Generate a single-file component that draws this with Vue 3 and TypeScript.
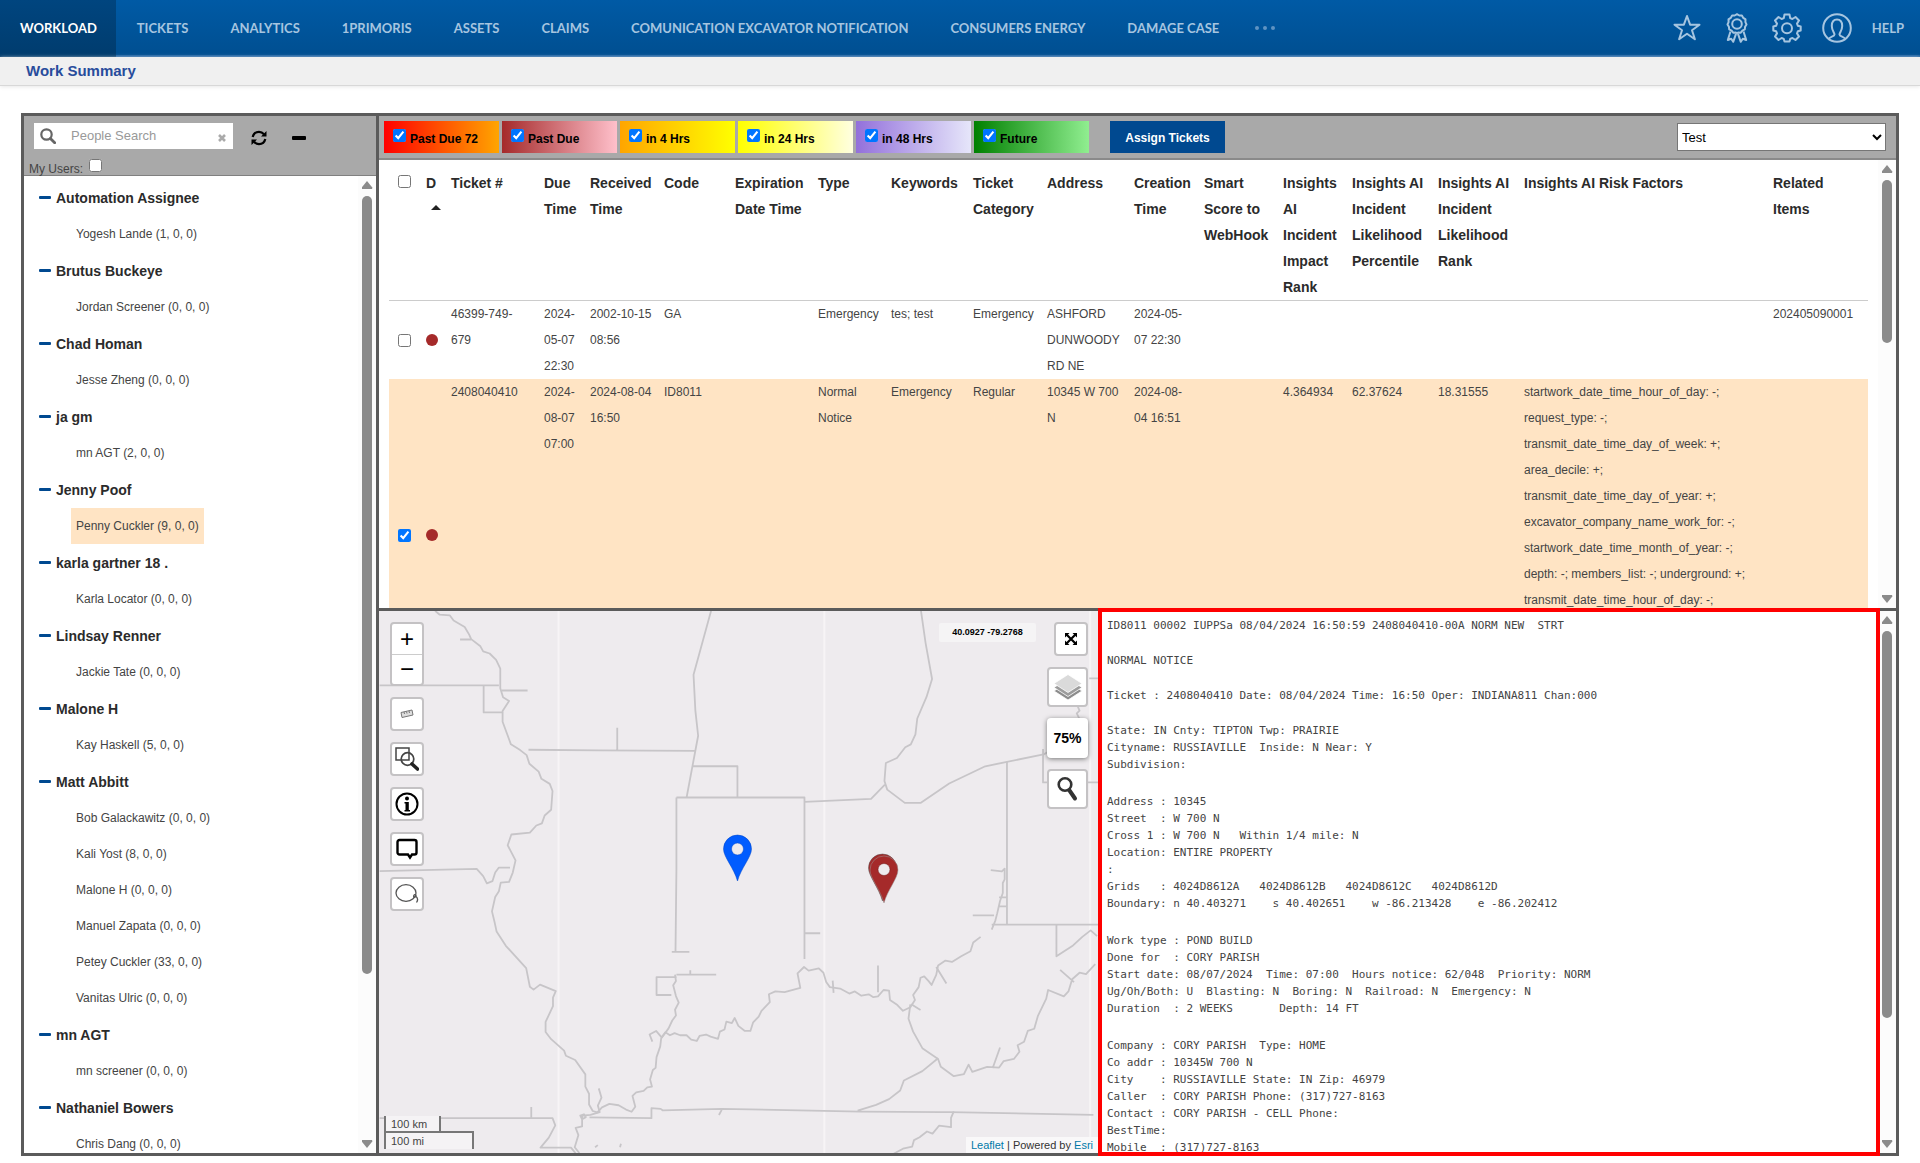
<script setup lang="ts">
import { ref } from 'vue'

interface Person { name: string; counts: string; selected?: boolean }
interface Group { name: string; people: Person[] }
interface Column { key: string; label: string; width: number | null }
interface Ticket { id: string; checked: boolean; tall?: boolean; cells: Record<string, string> }

const navItems = [
  'Workload', 'Tickets', 'Analytics', '1Primoris', 'Assets', 'Claims',
  'Comunication Excavator Notification', 'Consumers Energy', 'Damage Case',
]

const p = (name: string, first = 0, selected = false): Person => ({ name, counts: `(${first}, 0, 0)`, selected })

const groups: Group[] = [
  { name: 'Automation Assignee', people: [p('Yogesh Lande', 1)] },
  { name: 'Brutus Buckeye', people: [p('Jordan Screener')] },
  { name: 'Chad Homan', people: [p('Jesse Zheng')] },
  { name: 'ja gm', people: [p('mn AGT', 2)] },
  { name: 'Jenny Poof', people: [p('Penny Cuckler', 9, true)] },
  { name: 'karla gartner 18 .', people: [p('Karla Locator')] },
  { name: 'Lindsay Renner', people: [p('Jackie Tate')] },
  { name: 'Malone H', people: [p('Kay Haskell', 5)] },
  {
    name: 'Matt Abbitt',
    people: [p('Bob Galackawitz'), p('Kali Yost', 8), p('Malone H'), p('Manuel Zapata'), p('Petey Cuckler', 33), p('Vanitas Ulric')],
  },
  { name: 'mn AGT', people: [p('mn screener')] },
  { name: 'Nathaniel Bowers', people: [p('Chris Dang')] },
]

const filters = ref([
  { label: 'Past Due 72', from: '#ff0000', to: '#ffa500', on: true },
  { label: 'Past Due', from: '#a52a2a', to: '#ffc0cb', on: true },
  { label: 'in 4 Hrs', from: '#ffa500', to: '#ffff00', on: true },
  { label: 'in 24 Hrs', from: '#ffff00', to: '#ffffe0', on: true },
  { label: 'in 48 Hrs', from: '#9370db', to: '#e6e6fa', on: true },
  { label: 'Future', from: '#008000', to: '#90ee90', on: true },
])

const columns: Column[] = [
  { key: 'ticket', label: 'Ticket #', width: 93 },
  { key: 'due', label: 'Due\nTime', width: 46 },
  { key: 'received', label: 'Received\nTime', width: 74 },
  { key: 'code', label: 'Code', width: 71 },
  { key: 'expires', label: 'Expiration\nDate Time', width: 83 },
  { key: 'type', label: 'Type', width: 73 },
  { key: 'keywords', label: 'Keywords', width: 82 },
  { key: 'category', label: 'Ticket\nCategory', width: 74 },
  { key: 'address', label: 'Address', width: 87 },
  { key: 'created', label: 'Creation\nTime', width: 70 },
  { key: 'smart', label: 'Smart\nScore to\nWebHook', width: 79 },
  { key: 'impact', label: 'Insights\nAI\nIncident\nImpact\nRank', width: 69 },
  { key: 'percentile', label: 'Insights AI\nIncident\nLikelihood\nPercentile', width: 86 },
  { key: 'rank', label: 'Insights AI\nIncident\nLikelihood\nRank', width: 86 },
  { key: 'risk', label: 'Insights AI Risk Factors', width: null },
  { key: 'related', label: 'Related\nItems', width: 99 },
]

const tickets = ref<Ticket[]>([
  {
    id: '46399-749-679',
    checked: false,
    cells: {
      ticket: '46399-749-\n679', due: '2024-\n05-07\n22:30', received: '2002-10-15\n08:56', code: 'GA',
      type: 'Emergency', keywords: 'tes; test', category: 'Emergency', address: 'ASHFORD\nDUNWOODY\nRD NE',
      created: '2024-05-\n07 22:30', related: '202405090001',
    },
  },
  {
    id: '2408040410',
    checked: true,
    tall: true,
    cells: {
      ticket: '2408040410', due: '2024-\n08-07\n07:00', received: '2024-08-04\n16:50', code: 'ID8011',
      type: 'Normal\nNotice', keywords: 'Emergency', category: 'Regular', address: '10345 W 700\nN',
      created: '2024-08-\n04 16:51', impact: '4.364934', percentile: '62.37624', rank: '18.31555',
      risk: 'startwork_date_time_hour_of_day: -;\nrequest_type: -;\ntransmit_date_time_day_of_week: +;\narea_decile: +;\ntransmit_date_time_day_of_year: +;\nexcavator_company_name_work_for: -;\nstartwork_date_time_month_of_year: -;\ndepth: -; members_list: -; underground: +;\ntransmit_date_time_hour_of_day: -;',
    },
  },
])

const notice: string[] = [
  'ID8011 00002 IUPPSa 08/04/2024 16:50:59 2408040410-00A NORM NEW  STRT',
  'NORMAL NOTICE',
  'Ticket : 2408040410 Date: 08/04/2024 Time: 16:50 Oper: INDIANA811 Chan:000',
  `State: IN Cnty: TIPTON Twp: PRAIRIE
Cityname: RUSSIAVILLE  Inside: N Near: Y
Subdivision:`,
  `Address : 10345
Street  : W 700 N
Cross 1 : W 700 N   Within 1/4 mile: N
Location: ENTIRE PROPERTY
:
Grids   : 4024D8612A   4024D8612B   4024D8612C   4024D8612D
Boundary: n 40.403271    s 40.402651    w -86.213428    e -86.202412`,
  `Work type : POND BUILD
Done for  : CORY PARISH
Start date: 08/07/2024  Time: 07:00  Hours notice: 62/048  Priority: NORM
Ug/Oh/Both: U  Blasting: N  Boring: N  Railroad: N  Emergency: N
Duration  : 2 WEEKS       Depth: 14 FT`,
  `Company : CORY PARISH  Type: HOME
Co addr : 10345W 700 N
City    : RUSSIAVILLE State: IN Zip: 46979
Caller  : CORY PARISH Phone: (317)727-8163
Contact : CORY PARISH - CELL Phone:
BestTime:
Mobile  : (317)727-8163`,
]

const myUsers = ref(false)
const allTickets = ref(false)
const search = ref('')
const view = ref('Test')
</script>

<template>
  <div class="page">
    <header class="topbar">
      <nav class="nav">
        <a v-for="(item, i) in navItems" :key="item" href="#" :class="{ active: i === 0 }">{{ item }}</a>
        <button class="more" type="button" aria-label="More"><i></i><i></i><i></i></button>
      </nav>
      <div class="tools">
        <button type="button" aria-label="Favorites">
          <svg width="30" height="30" viewBox="0 0 30 30"><path d="M15 3l3.1 8.7h9.4l-7.5 5.5 2.9 9-7.9-5.5-7.9 5.5 2.9-9-7.5-5.5h9.4z" /></svg>
        </button>
        <button type="button" aria-label="Badges">
          <svg width="30" height="30" viewBox="0 0 30 30">
            <path d="M15 1.2l2.3 1.3 2.6.1 1.4 2.3 2.2 1.5-.1 2.7 1.1 2.3-1.4 2.3-.3 2.7-2.4 1.2-1.6 2.1-2.7-.1-1.1.6-1.1-.6-2.7.1-1.6-2.1-2.4-1.2-.3-2.7-1.4-2.3 1.1-2.3-.1-2.7 2.2-1.5 1.4-2.3 2.6-.1z" />
            <circle cx="15" cy="11" r="4.8" />
            <path d="M8.5 18.5L5.8 27l3.4-1.2 2 3 2.8-8M21.500 18.500L24.200 27l-3.400-1.200-2 3-2.800-8" />
          </svg>
        </button>
        <button type="button" aria-label="Settings">
          <svg width="30" height="30" viewBox="0 0 30 30">
            <path d="M12.500 1.500h5l.7 3.600 2.200.9 3.100-2 3.500 3.500-2 3.100.9 2.200 2.800.7v4l-2.800.7-.9 2.200 2 3.100-3.500 3.500-3.100-2-2.200.9-.7 2.600h-5l-.7-2.600-2.200-.9-3.100 2L3 23.500l2-3.100-.9-2.200-2.800-.7v-4l2.800-.7.9-2.200-2-3.100L6.500 4l3.100 2 2.200-.9z" />
            <circle cx="15" cy="15.200" r="5" />
          </svg>
        </button>
        <button type="button" aria-label="Account">
          <svg width="30" height="30" viewBox="0 0 30 30">
            <circle cx="15" cy="15" r="13.800" />
            <path d="M7 26c.5-2.500 5.500-2.200 5.500-4.500 0-2-2.700-4-2.700-8.500 0-4 2-6.500 5.200-6.500s5.200 2.500 5.200 6.500c0 4.500-2.700 6.500-2.700 8.500 0 2.300 5 2 5.500 4.500" />
          </svg>
        </button>
        <a class="help" href="#">Help</a>
      </div>
    </header>

    <div class="subbar"><h1>Work Summary</h1></div>

    <main class="workspace">
      <aside class="people">
        <div class="people-head">
          <div class="people-tools">
            <div class="search">
              <svg width="16" height="16" viewBox="0 0 16 16" fill="none" stroke="#666"><circle cx="6.500" cy="6.500" r="5.200" stroke-width="2.200" /><path d="M10.400 10.400l4.300 4.300" stroke-width="2.800" stroke-linecap="round" /></svg>
              <input v-model="search" type="text" placeholder="People Search" aria-label="People Search" />
              <button type="button" aria-label="Clear"><svg width="8" height="8" viewBox="0 0 8 8"><path d="M1 1l6 6M7 1L1 7" stroke="#aaa" stroke-width="2.600" /></svg></button>
            </div>
            <button class="icon refresh" type="button" aria-label="Refresh">
              <svg width="16" height="16" viewBox="0 0 16 16" fill="none" stroke="#000" stroke-width="2.200"><path d="M1.700 7C2.500 3.500 5 1.900 8 1.900c2.200 0 3.700.9 5 2.400" /><path d="M14.300 9c-.8 3.500-3.300 5.100-6.300 5.100-2.200 0-3.700-.9-5-2.400" /><path d="M15.500 1v5.500H10zM.5 15V9.500H6z" fill="#000" stroke="none" /></svg>
            </button>
            <button class="icon" type="button" aria-label="Collapse all"><span class="dash"></span></button>
          </div>
          <label class="mine"><span>My Users:</span><input v-model="myUsers" type="checkbox" /></label>
        </div>
        <div class="pane-body">
          <ul class="tree">
            <li v-for="group in groups" :key="group.name">
              <button class="group" type="button"><span class="minus"></span>{{ group.name }}</button>
              <ul>
                <li v-for="person in group.people" :key="person.name" class="person">
                  <a href="#" :class="{ selected: person.selected }">{{ person.name }} {{ person.counts }}</a>
                </li>
              </ul>
            </li>
          </ul>
          <div class="scrollbar"><b class="up"></b><div class="track"><div class="thumb" style="height: 83%"></div></div><b class="down"></b></div>
        </div>
      </aside>

      <section class="content">
        <div class="toolbar">
          <label v-for="f in filters" :key="f.label" class="chip" :style="{ backgroundImage: `linear-gradient(to right, ${f.from}, ${f.to})` }">
            <input v-model="f.on" type="checkbox" /><span>{{ f.label }}</span>
          </label>
          <button class="assign" type="button">Assign Tickets</button>
          <select v-model="view" aria-label="View"><option>Test</option></select>
        </div>

        <div class="pane-body tickets">
          <div class="table-area">
            <table>
              <colgroup>
                <col style="width: 33px" /><col style="width: 25px" />
                <col v-for="c in columns" :key="c.key" :style="c.width ? { width: c.width + 'px' } : undefined" />
              </colgroup>
              <thead>
                <tr>
                  <th class="tick"><input v-model="allTickets" type="checkbox" aria-label="Select all tickets" /></th>
                  <th>D<span class="sort"></span></th>
                  <th v-for="c in columns" :key="c.key">{{ c.label }}</th>
                </tr>
              </thead>
              <tbody>
                <tr v-for="t in tickets" :key="t.id" :class="{ chosen: t.checked, tall: t.tall }">
                  <td class="tick mid"><input v-model="t.checked" type="checkbox" :aria-label="'Select ' + t.id" /></td>
                  <td class="mid"><span class="dot"></span></td>
                  <td v-for="c in columns" :key="c.key">{{ t.cells[c.key] }}</td>
                </tr>
              </tbody>
            </table>
          </div>
          <div class="scrollbar"><b class="up"></b><div class="track"><div class="thumb" style="height: 40%"></div></div><b class="down"></b></div>
        </div>

        <div class="bottom">
          <div class="map">
            <svg class="borders" viewBox="0 0 719 542" preserveAspectRatio="xMinYMin slice">
              <g transform="translate(-4 -11) scale(.4623 .3591)" fill="none">
                <g stroke="#f7f4f6" stroke-width="2"><path d="M397 30V1540M972 30V1540M1547 30V1540" /></g>
                <g stroke="#c7c5c8" stroke-width="1.800" stroke-linejoin="round">
                  <path d="M130 30l10 11 22 2 8 14 24 18 10 22 4 12 20 20 6 14 14 6 14 18 9 24 0 55 6 25 13 10-14 28 0 30 10 35 8 28 20 16 14 14 6 24 20 22 6 20 18 14 6 20-3 52-14 16-6 22-12 6-14 20-40 5-8 30 8 20 9 22-6 34-8 26-18 2-4 24-8 16-7 40 6 32 4 24 20 40 44 62 8 52 8 8 14-14 34 18-6 18 0 24-16 44 0 28 12 20 28 32 4 14 20 12 22 40 0 34 8 20 0 30 8 18 10 4 10-14 16-10 20 4 16 12 12 6 8-14-6-30 8-10 16-4 8-10 10-2-4-20 6-26 6-6 2-30 8-30 2-22 16-28 8-22 8-14-2-16 8-20-6-18-6-30 6-12-2-18" />
                  <path d="M184 110h24M10 238H268M235 238v75h42M274 252h56M332 417l152 2 208 1M524 356v63M10 755l210-6 14 20 8 20 12-6 6-24 8-14 24 0" />
                  <path d="M727 30l-38 178 4 100 6 70-8 55-17 117M686 463h98v87M652 550h277v385l0 65M652 550l0 200-2 230M642 980h38M652 1043h86M682 1043v-12M652 1050h-43v50h32M929 928h34M929 562l144-8 30-40" />
                  <path d="M1181 30l10 90 14 100-12 50-20 60-4 44-10 28-12 8-18 30-24 14-3 50 6 24 38 37 34 0 62-54 78-48 126-33 40-26" />
                  <path d="M1367 450v454M1334 904H1566M1445 415v93h120M1545 218h22M1518 290l6 18-6 8 6 16M1332 752l24 4 6-8 0 30-4 10 0 28-6 22-6 34-4 20-8 26M1350 828h16M1350 853h16M1293 878h46M1474 904v88l36-30 20-24 18-18 14 16" />
                  <path d="M600 1230l-6-20 14-10 12 18 8-14 10 8 10-6 12 6 14 0 10 12 12 4 6-14 14-4 10 6 16 6 4-20 10-6 4-22 12 4 6-14 8 22 14 14 12 0 6-24 12-16 6-16 18-24-2-22 14-8 20 2 34-12-6-40 14-18 10 10 22-6 10 12 6 26 8 14 22 4 20 14 12-6 14 12 16-4 10 8 10-2 12-18 12 2 2 26 16 14 12 16 16-10 10-20-4-14 12-22 4-26 8-4 10 14 6 10 10-28 4-26 16-14 14 4 20-16 20-14 6-24 16-16" />
                  <path d="M990 1060l2 34M1088 1018v74M1214 1022l22 46M1158 1126l-4 40 10 36 20 46 34 30 6 22 28 26 22-6 10-26 8 20 32-14 26 2 10-18 22-6 12-20-4-18 14-10 8-30 14-6 8-36 18-48 4-24 34 18 10-14 8-34 16-18 14 4 20-28M1482 1030l30 34M1160 1126l20 16M1336 1304l16-58" />
                  <path d="M1218 1276l-34 36-40 26-8 28-24 24-28 16-40 16M10 1443h374l6 20-14 34-18 28h66l10 16M338 1412v31M464 1441l134 2 0-28 20 2 4 4 128-4 300 8 174 1h20l310 8M750 1420l-6 14" />
                  <path d="M484 1360l6 26-8 22 4 18-20 8-18 2 0 30-14 4 6 20-8 34 10 16M530 1524l2-10M476 1524l6-6M444 1436l8-4 4 8-8 6z" />
                  <path d="M1252 1424l-6 18 0 26-26-4-14 22-12-6-16 16-12 8-4 18-20 6-20 14" />
                </g>
              </g>
              <g stroke-opacity=".5">
                <path d="M358.500 270C355 257 344.500 246 344.500 238a14 14 0 0 1 28 0c0 8-10.500 19-14 32z" fill="#005cff" stroke="#0046c8" />
                <circle cx="358.500" cy="238" r="6" fill="#eeebee" stroke="#0046c8" />
                <path d="M503.500 290C500 277 489.500 265 489.500 257a14 14 0 0 1 28 0c0 8-10.500 20-14 33z" fill="#a52a2a" stroke="#555" />
                <path d="M505 292C501.500 279 491 267 491 259a14 14 0 0 1 28 0c0 8-10.500 20-14 33z" fill="#a52a2a" stroke="#999" />
                <circle cx="505" cy="258.500" r="6" fill="#eeebee" stroke="#701818" />
              </g>
            </svg>

            <div class="controls left">
              <div class="ctl zoom"><button type="button" aria-label="Zoom in">+</button><button type="button" aria-label="Zoom out">−</button></div>
              <button class="ctl" type="button" aria-label="Measure"><svg width="14" height="10" viewBox="0 0 14 10" fill="#ddd" stroke="#777"><path d="M1 3.500L12 1l1 5L2 8.500zM4 3l.5 2M6.500 2.500l.5 2M9 2l.5 2" /></svg></button>
              <button class="ctl" type="button" aria-label="Zoom to area"><svg width="24" height="24" viewBox="0 0 24 24" fill="none" stroke="#444"><path d="M1 1h13v12H1z" stroke-width="1.500" /><circle cx="12.500" cy="12" r="6.300" stroke-width="1.700" /><path d="M17 17l5.500 5" stroke="#222" stroke-width="3.600" stroke-linecap="round" /></svg></button>
              <button class="ctl" type="button" aria-label="Information"><svg width="24" height="24" viewBox="0 0 24 24"><circle cx="12" cy="12" r="10.500" fill="none" stroke="#000" stroke-width="2" /><circle cx="12" cy="6.500" r="2" /><path d="M9.500 10h4.300v8H15v1.500H9.500V18h1v-6.500h-1z" /></svg></button>
              <button class="ctl" type="button" aria-label="Comments"><svg width="24" height="24" viewBox="0 0 24 24" fill="none" stroke="#000" stroke-width="2.400"><path d="M4.500 3h15A2 2 0 0 1 21.500 5v10.500a2 2 0 0 1-2 2h-2.500l-2 3-2-3H4.500a2 2 0 0 1-2-2V5a2 2 0 0 1 2-2z" /></svg></button>
              <button class="ctl" type="button" aria-label="Lasso"><svg width="24" height="24" viewBox="0 0 24 24" fill="none" stroke="#555" stroke-width="1.300"><ellipse cx="11" cy="11" rx="10" ry="8.300" /><path d="M19 15.500c-1-2 .5-3.500 1.700-2.500.8.700-.2 2.200-1.700 2.500zM20.700 14c1.800 1.500 2.500 4 .8 6.500" /></svg></button>
            </div>

            <div class="coords">40.0927 -79.2768</div>
            <div class="controls right">
              <button class="ctl" type="button" aria-label="Full screen"><svg width="12" height="12" viewBox="0 0 12 12"><path d="M1 1l10 10M11 1L1 11" stroke="#000" stroke-width="2.200" /><path d="M0 0h4.500L0 4.500zM12 0v4.500L7.500 0zM0 12V7.500L4.500 12zM12 12H7.500L12 7.500z" /></svg></button>
              <button class="ctl big" type="button" aria-label="Layers"><svg width="28" height="28" viewBox="0 0 28 28" stroke="#fff" stroke-width=".800"><path d="M0 18l14-9 14 9-14 9z" fill="#8c8c8c" /><path d="M0 14.500l14-9 14 9-14 9z" fill="#9c9c9c" /><path d="M0 10.500l14-9 14 9-14 9z" fill="#dadada" /></svg></button>
              <button class="ctl big opacity" type="button">75%</button>
              <button class="ctl big" type="button" aria-label="Search map"><svg width="24" height="26" viewBox="0 0 24 26" fill="none" stroke="#333"><circle cx="9" cy="8.500" r="6.300" stroke-width="2.600" /><path d="M13.500 14.500l5.500 8" stroke-width="4" stroke-linecap="round" /></svg></button>
            </div>

            <div class="scale"><span class="km">100 km</span><span class="mi">100 mi</span></div>
            <div class="credit"><a href="#">Leaflet</a> | Powered by <a href="#">Esri</a></div>
          </div>

          <div class="detail">
            <div class="notice">
              <pre v-for="(block, i) in notice" :key="i" :class="{ long: block.includes('\n') }">{{ block }}</pre>
            </div>
            <div class="scrollbar"><b class="up"></b><div class="track"><div class="thumb" style="height: 77%"></div></div><b class="down"></b></div>
          </div>
        </div>
      </section>
    </main>
  </div>
</template>

<style>
body {
  background: #fff;
}
</style>

<style scoped>
* {
  box-sizing: border-box;
}
.page {
  display: flex;
  flex-direction: column;
  height: 100vh;
  overflow: hidden;
  font-family: "Liberation Sans", Arial, sans-serif;
  font-size: 12px;
  color: #444;
}
button {
  padding: 0;
  border: 0;
  background: none;
  font: inherit;
  color: inherit;
}
a {
  text-decoration: none;
  color: inherit;
}
ul {
  margin: 0;
  padding: 0;
  list-style: none;
}
input[type="checkbox"] {
  flex: none;
  width: 13px;
  height: 13px;
  margin: 0;
}

/* top navigation */
.topbar {
  flex: none;
  display: flex;
  justify-content: space-between;
  height: 57px;
  background: linear-gradient(#005aa5, #004f91);
  border-bottom: 2px solid #1c62a3;
  font-family: Lato, "Open Sans", sans-serif;
  font-size: 13px;
  font-weight: 700;
  text-transform: uppercase;
  color: #a6c5e0;
}
.nav {
  display: flex;
}
.nav a {
  padding: 0 21px;
  line-height: 57px;
  white-space: nowrap;
}
.nav a.active {
  height: 57px;
  padding: 0 19px 0 20px;
  background: linear-gradient(#00457f, #003c6e);
  color: #fff;
}
.more {
  display: flex;
  align-items: center;
  gap: 4px;
  margin-left: 15px;
}
.more i {
  width: 4px;
  height: 4px;
  border-radius: 50%;
  background: #5f93c2;
}
.tools {
  display: flex;
  align-items: center;
  gap: 20px;
  padding-right: 16px;
}
.tools svg {
  display: block;
  fill: none;
  stroke: #a6c5e0;
  stroke-width: 2;
  stroke-linejoin: round;
}
.subbar {
  flex: none;
  height: 29px;
  padding-left: 26px;
  background: #f0f0f0;
  border-bottom: 1px solid #d8d8d8;
  box-shadow: 0 1px 4px #e8e8e8;
}
h1 {
  margin: 0;
  font-size: 15px;
  line-height: 28px;
  color: #284c9c;
}

/* workspace */
.workspace {
  flex: 1;
  display: flex;
  min-height: 0;
  margin: 27px 21px 7px;
  border: 3px solid #5b5b5b;
}
.people {
  flex: none;
  display: flex;
  flex-direction: column;
  width: 355px;
  border-right: 3px solid #5b5b5b;
}
.people-head {
  flex: none;
  height: 60px;
  padding: 7px 5px 0;
  background: #a9a9a9;
  border-bottom: 1px solid #808080;
}
.people-tools {
  display: flex;
  align-items: center;
  padding-left: 5px;
}
.search {
  display: flex;
  align-items: center;
  width: 199px;
  height: 26px;
  padding: 0 7px 0 6px;
  background: #fff;
}
.search input {
  flex: 1;
  min-width: 0;
  padding: 0 0 2px;
  margin-left: 15px;
  border: 0;
  outline: 0;
  background: none;
  font: 13px "Liberation Sans", Arial, sans-serif;
}
.search input::placeholder {
  color: #999;
}
.search button {
  display: flex;
  padding-top: 4px;
}
.icon {
  display: flex;
  padding-top: 4px;
}
.refresh {
  margin: 0 25px 0 18px;
}
.dash {
  width: 14px;
  height: 4px;
  border-radius: 1px;
  background: #000;
}
.mine {
  display: flex;
  align-items: flex-start;
  gap: 6px;
  margin-top: 10px;
}
.mine span {
  padding-top: 3px;
}
.pane-body {
  flex: 1;
  display: flex;
  min-height: 0;
  overflow: hidden;
}
.tree {
  flex: 1;
  padding: 3px 0 0 15px;
}
.group {
  display: flex;
  align-items: center;
  gap: 5px;
  height: 37px;
  font-size: 14px;
  font-weight: 700;
  color: #2b2b2b;
}
.minus {
  width: 12px;
  height: 3px;
  border-radius: 1px;
  background: #004990;
}
.person {
  height: 36px;
  padding-left: 32px;
  line-height: 36px;
}
.person a {
  display: inline-block;
  padding: 0 5px;
}
.person .selected {
  background: #ffe4c4;
}

/* scrollbars */
.scrollbar {
  flex: none;
  display: flex;
  flex-direction: column;
  align-items: center;
  width: 18px;
  background: #fcfcfc;
}
.scrollbar b {
  flex: none;
  width: 11px;
  height: 8px;
  background: #8b8b8b;
}
.up {
  margin: 5px 0 7px;
  clip-path: polygon(50% 0, 100% 85%, 95% 100%, 5% 100%, 0 85%);
}
.down {
  margin: 7px 0 5px;
  clip-path: polygon(5% 0, 95% 0, 100% 15%, 50% 100%, 0 15%);
}
.track {
  flex: 1;
  width: 10px;
}
.thumb {
  border-radius: 5px;
  background: #8b8b8b;
}

/* filter toolbar */
.content {
  flex: 1;
  display: grid;
  grid-template-rows: 44px minmax(0, 448fr) minmax(0, 545fr);
  min-width: 0;
}
.toolbar {
  display: flex;
  align-items: flex-start;
  padding: 5px 10px 0 5px;
  background: #a9a9a9;
  border-bottom: 2px solid #8a8a8a;
}
.chip {
  display: flex;
  gap: 4px;
  width: 115px;
  height: 32px;
  margin-right: 3px;
  padding: 8px 0 0 9px;
  font-weight: 700;
  color: #000;
}
.chip span {
  padding-top: 3px;
}
.assign {
  width: 115px;
  height: 32px;
  margin-left: 18px;
  padding-top: 2px;
  background: #004990;
  font-weight: 700;
  color: #fff;
}
select {
  width: 209px;
  height: 28px;
  margin: 2px 0 0 auto;
  border: 1px solid #767676;
  background: #fff;
  font: 13px "Liberation Sans", Arial, sans-serif;
  color: #000;
}

/* ticket table */
.table-area {
  flex: 1;
  min-width: 0;
  padding: 10px 10px 0;
  background: #fff;
}
table {
  width: 100%;
  table-layout: fixed;
  border-collapse: separate;
  border-spacing: 0;
}
th,
td {
  padding: 0 4px;
  line-height: 26px;
  text-align: left;
  vertical-align: top;
  white-space: pre;
}
th {
  border-bottom: 1px solid #ccc;
  font-size: 14px;
  color: #2b2b2b;
}
.mid {
  vertical-align: middle;
}
.tick {
  padding-left: 9px;
}
.tick input {
  display: block;
}
th.tick input {
  margin-top: 5px;
}
.sort {
  display: block;
  width: 10px;
  height: 5px;
  margin: 9px 0 0 5px;
  background: #222;
  clip-path: polygon(50% 0, 100% 100%, 0 100%);
}
.dot {
  display: block;
  width: 12px;
  height: 12px;
  border-radius: 50%;
  background: #a52a2a;
}
.chosen {
  background: #ffe4c4;
}
.tall {
  height: 312px;
}

/* map and notice */
.bottom {
  display: grid;
  grid-template-columns: minmax(0, 719fr) minmax(0, 798fr);
  border-top: 3px solid #5b5b5b;
}
.map {
  position: relative;
  overflow: hidden;
  background: #eeebee;
}
.borders {
  display: block;
  width: 100%;
  height: 100%;
}
.borders g path {
  vector-effect: non-scaling-stroke;
}
.controls {
  position: absolute;
  top: 11px;
  display: flex;
  flex-direction: column;
}
.left {
  left: 11px;
  gap: 11px;
}
.right {
  right: 10px;
  align-items: flex-end;
  gap: 11px;
}
.ctl {
  display: flex;
  align-items: center;
  justify-content: center;
  width: 34px;
  height: 34px;
  border: 2px solid #c4c2c4;
  border-radius: 4px;
  background: #fff;
  color: #000;
}
.big {
  width: 41px;
  height: 40px;
}
.zoom {
  flex-direction: column;
  height: 64px;
}
.zoom button {
  flex: 1;
  width: 100%;
  font: 24px/28px "Liberation Sans", Arial, sans-serif;
}
.zoom button + button {
  border-top: 1px solid #ccc;
}
.opacity {
  border: 0;
  box-shadow: 0 1px 5px #777;
  font-size: 14px;
  font-weight: 700;
}
.coords {
  position: absolute;
  top: 12px;
  right: 62px;
  width: 97px;
  border-radius: 2px;
  background: #f5f4f5;
  font-size: 9px;
  font-weight: 700;
  line-height: 19px;
  text-align: center;
  color: #000;
}
.scale {
  position: absolute;
  left: 5px;
  bottom: 4px;
  display: flex;
  flex-direction: column;
  font-size: 11px;
}
.scale span {
  height: 17px;
  padding-left: 5px;
  border: 2px solid #777;
  border-top: 0;
  background: #f5f3f5;
  line-height: 16px;
}
.scale .km {
  width: 57px;
}
.scale .mi {
  width: 90px;
  height: 18px;
  margin-top: -2px;
  border: 2px solid #777;
  border-bottom: 0;
}
.credit {
  position: absolute;
  right: 0;
  bottom: 0;
  padding: 0 5px;
  background: #f9f8f9;
  font-size: 11px;
  line-height: 16px;
  color: #333;
}
.credit a {
  color: #0078a8;
}
.detail {
  display: flex;
  min-height: 0;
}
.notice {
  position: relative;
  flex: 1;
  min-width: 0;
  margin: -3px -2px -3px 0;
  padding: 5px 5px 0;
  border: 4px solid #f00;
  background: #fff;
  overflow: hidden;
}
pre {
  margin: 0 0 18px;
  font: 11px/17px "DejaVu Sans Mono", monospace;
}
pre.long {
  margin-bottom: 20px;
}
</style>
